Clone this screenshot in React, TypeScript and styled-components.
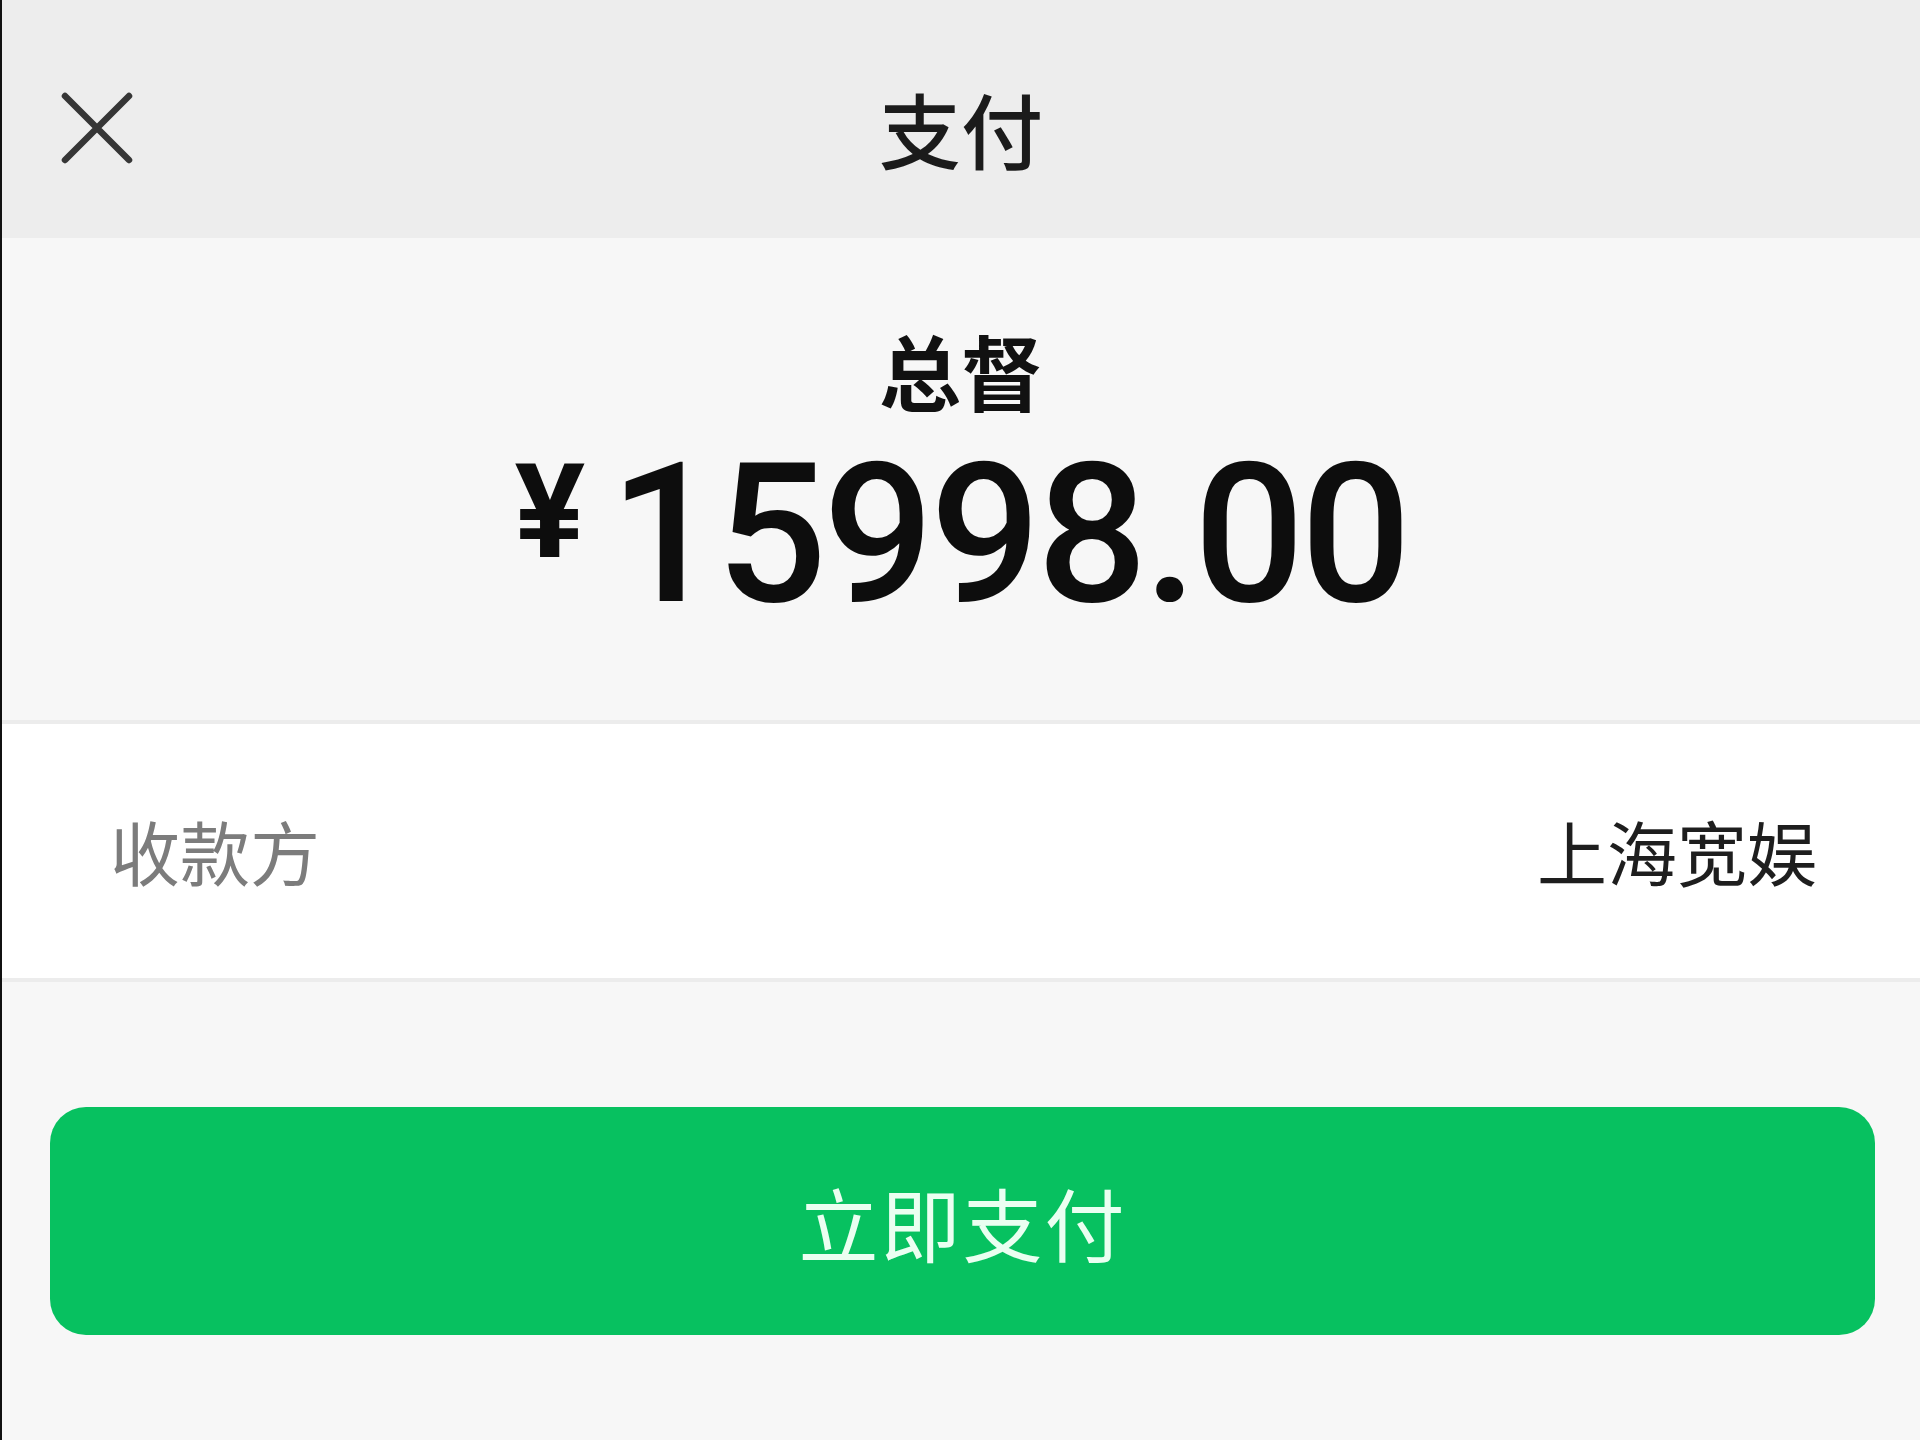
import styled, { createGlobalStyle } from "styled-components";

const GlobalStyle = createGlobalStyle`
  html, body {
    margin: 0;
    padding: 0;
    background: #f7f7f7;
  }
  body {
    font-family: "Noto Sans CJK SC", "Noto Sans", sans-serif;
  }
`;

const Page = styled.div`
  min-height: 1440px;
  background: #f7f7f7;
  border-left: 2px solid #111;
  display: flex;
  flex-direction: column;
`;

const NavBar = styled.header`
  height: 238px;
  box-sizing: border-box;
  padding-top: 18px;
  background: #ededed;
  display: grid;
  grid-template-columns: 1fr auto 1fr;
  align-items: center;
`;

const CloseButton = styled.button`
  justify-self: start;
  margin-left: 58px;
  padding: 0;
  border: none;
  background: none;
  display: flex;
  cursor: pointer;
`;

const NavTitle = styled.h1`
  margin: 0;
  font-size: 82px;
  line-height: 1;
  font-weight: 500;
  color: #1b1b1b;
`;

const Summary = styled.section`
  padding: 91px 0 88px;
  display: flex;
  flex-direction: column;
  align-items: center;
  gap: 26px;
`;

const Merchant = styled.div`
  font-size: 82px;
  line-height: 1;
  font-weight: 700;
  color: #111;
`;

const Amount = styled.div`
  display: flex;
  align-items: flex-start;
  font-family: Roboto, "Liberation Sans", sans-serif;
  color: #0d0d0d;
  line-height: 1;
`;

const Currency = styled.span`
  font-size: 132px;
  font-weight: 700;
  margin-top: 9px;
  margin-right: 24px;
`;

const Figure = styled.span`
  font-size: 195px;
  font-weight: 500;
  letter-spacing: -4px;
`;

const InfoRow = styled.div`
  height: 262px;
  box-sizing: border-box;
  border-top: 4px solid #ececec;
  border-bottom: 4px solid #ececec;
  background: #fff;
  padding: 0 103px 0 108px;
  display: flex;
  align-items: center;
  justify-content: space-between;
  font-size: 70px;
  line-height: 1;
`;

const Label = styled.span`
  color: #7c7c7c;
`;

const Value = styled.span`
  color: #1e1e1e;
`;

const Actions = styled.div`
  padding: 125px 45px 0 48px;
`;

const PayButton = styled.button`
  width: 100%;
  height: 228px;
  border: none;
  border-radius: 36px;
  background: #07c160;
  color: #eafff1;
  font-family: "Noto Sans CJK SC", "Noto Sans", sans-serif;
  font-size: 80px;
  font-weight: 400;
  letter-spacing: 2px;
  cursor: pointer;
`;

function CloseIcon() {
  return (
    <svg width="74" height="74" viewBox="0 0 74 74">
      <path
        d="M5 5 L69 69 M69 5 L5 69"
        stroke="#363636"
        strokeWidth="6.5"
        strokeLinecap="round"
        fill="none"
      />
    </svg>
  );
}

export default function App() {
  return (
    <>
      <GlobalStyle />
      <Page>
        <NavBar>
          <CloseButton aria-label="关闭">
            <CloseIcon />
          </CloseButton>
          <NavTitle>支付</NavTitle>
          <div />
        </NavBar>
        <Summary>
          <Merchant>总督</Merchant>
          <Amount>
            <Currency>¥</Currency>
            <Figure>15998.00</Figure>
          </Amount>
        </Summary>
        <InfoRow>
          <Label>收款方</Label>
          <Value>上海宽娱</Value>
        </InfoRow>
        <Actions>
          <PayButton>立即支付</PayButton>
        </Actions>
      </Page>
    </>
  );
}
